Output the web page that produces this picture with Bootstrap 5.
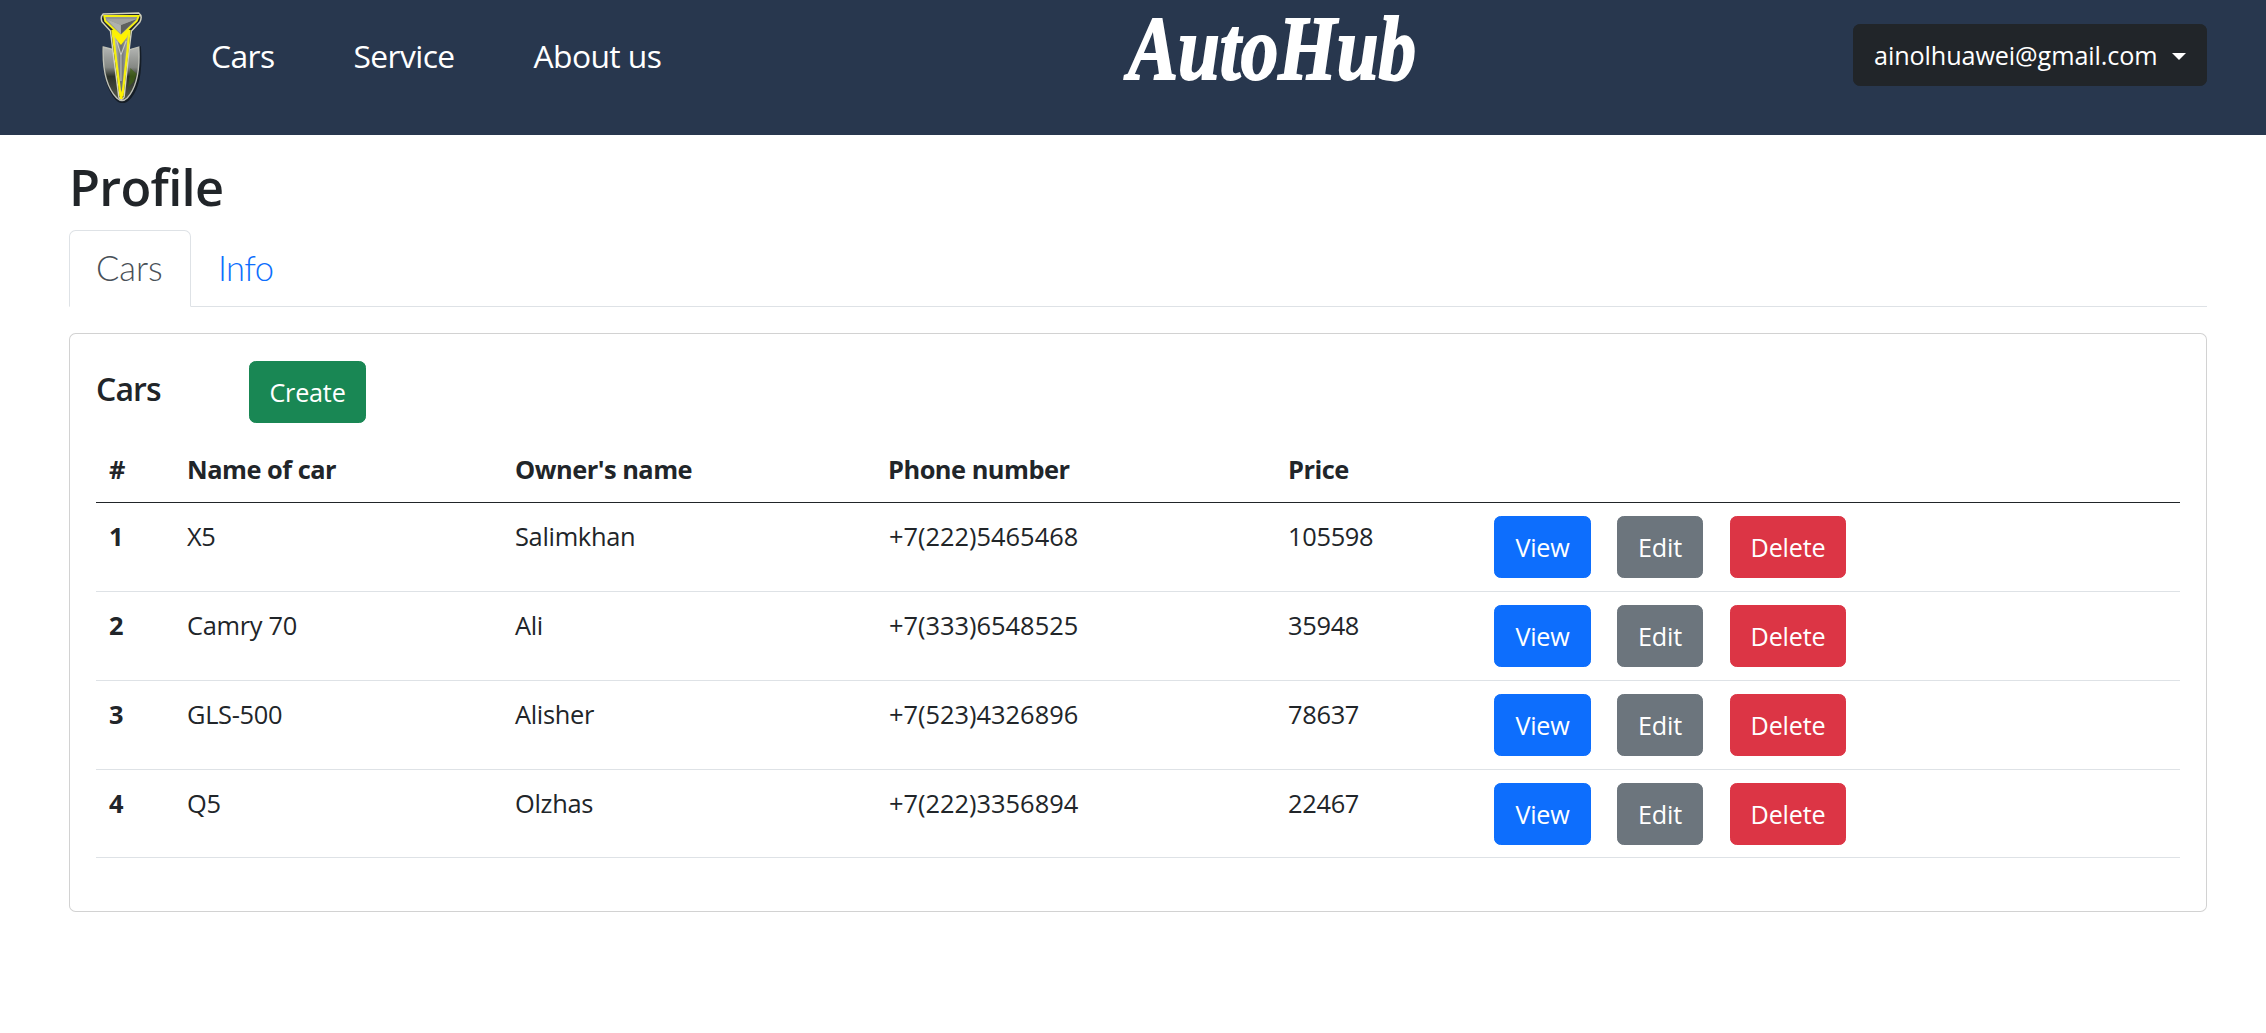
<!DOCTYPE html>
<html lang="en">
<head>
<meta charset="utf-8">
<meta name="viewport" content="width=device-width, initial-scale=1">
<title>AutoHub - Profile</title>
<link href="https://cdn.jsdelivr.net/npm/bootstrap@5.3.0/dist/css/bootstrap.min.css" rel="stylesheet">
<style>
html{font-size:26.4px}
body{font-family:"Open Sans","Noto Sans",sans-serif;font-size:25.4px;line-height:39.6px;color:#212529;overflow-x:hidden}
.topbar{height:135px;background:#28374e;padding:0 59px 0 100px}
.emblem{width:44px;height:94px;margin-top:9px}
.menu-links{margin:36px 0 0 67px;gap:79px}
.menu-links .nav-link{color:#fff;font-size:31.8px;line-height:40px;padding:0;white-space:nowrap;letter-spacing:-.6px}
.wordmark{width:310px;height:110px;margin:0 0 0 457px;overflow:visible}
.wordmark text{font-family:"Liberation Serif",serif;font-weight:700;font-style:italic;font-size:92px;fill:#fff;stroke:#fff;stroke-width:2px}
.btn{--bs-btn-font-size:25.2px;--bs-btn-line-height:39.6px;--bs-btn-border-radius:6.6px;padding:11px 0 9px;height:62px;white-space:nowrap;letter-spacing:-.2px}
.user-btn{width:354px;margin-top:24px;padding-left:20px;text-align:left;letter-spacing:-.1px}
.user-btn::after{margin-left:14px;vertical-align:.22em}
.page{width:2138px;margin-left:69px;padding-top:20px}
.page-title{font-size:50.5px;line-height:64px;font-weight:600;margin:0 0 11px;letter-spacing:-.7px}
.nav-tabs{height:77px}
.nav-tabs .nav-link{--bs-nav-tabs-border-radius:6.6px;height:77px;padding:17px 26px;font-family:Lato,sans-serif;font-weight:300;font-size:34.5px;line-height:40px}
.nav-tabs .nav-link.active{width:122px;color:#495057}
.nav-tabs .nav-link:not(.active){letter-spacing:-.6px}
.panel{margin-top:26px;height:579px;border-radius:6.6px;padding:27px 26px 0}
.panel-title{font-size:32px;line-height:40px;font-weight:600;margin:8px 0 0;width:153px;letter-spacing:-.9px}
.btn-create{width:117px}
.cars{table-layout:fixed;margin:13px 0 0;width:2084px}
.cars>:not(caption)>*>*{padding:14px 13px 12px}
.cars thead th{height:66px;border-bottom:1px solid #212529;letter-spacing:-.5px}
.cars tbody>tr>*{height:89px;border-bottom-width:1px}
.cars tbody>tr:last-child>*{height:88px;padding-bottom:11px}
.cars tbody td{letter-spacing:-.3px}
.cars tbody td:nth-child(4){letter-spacing:0;padding-left:14px}
.cars tbody td:nth-child(n+6){padding-top:13px}
.cars thead{vertical-align:top}
.w-view{width:97px}.w-edit{width:86px}.w-del{width:116px}
</style>
<script src="https://cdn.jsdelivr.net/npm/bootstrap@5.3.0/dist/js/bootstrap.bundle.min.js"></script>
</head>
<body>
<header class="topbar d-flex align-items-start">
  <svg class="emblem flex-shrink-0" viewBox="0 0 42 94" preserveAspectRatio="none" role="img" aria-label="Emblem">
    <defs>
      <linearGradient id="steel" x1="0" x2="1"><stop offset="0" stop-color="#d8dad4"/><stop offset=".5" stop-color="#6d706e"/><stop offset="1" stop-color="#b4b6b2"/></linearGradient>
      <linearGradient id="shade" x1="0" y1="0" x2="0" y2="1"><stop offset="0" stop-color="#b4b6b4"/><stop offset=".38" stop-color="#858884"/><stop offset=".55" stop-color="#2c322a"/><stop offset="1" stop-color="#55584b"/></linearGradient>
    </defs>
    <path d="M2 37Q9 42 14 41L21 88L29 41Q34 41 39 37Q42 78 27 92Q21 97 15 91Q2 77 2 37Z" fill="#151d26"/>
    <path d="M3 38L14 41H27L37 38Q39 74 26 89Q21 94 16 89Q2 74 3 38Z" fill="url(#shade)" stroke="#bfc1b8" stroke-width="1.3"/>
    <path d="M29 59L35 65L32 73L27 78Z" fill="#416413" opacity=".7"/>
    <path d="M3 5L37 4Q41 7 38 13L30 22L28 39L23 88Q20 93 18 88L12 39L10 22L2 13Q0 8 3 5Z" fill="#20252a" stroke="#d3d2bd" stroke-width="1.4"/>
    <path d="M12 22L28 22L26.5 40L21.5 86H19.5L14 40Z" fill="url(#steel)" stroke="#f5f010" stroke-width="2.2"/>
    <path d="M4 7H37L35 12L20 27L5 12Z" fill="#929491" stroke="#f5f010" stroke-width="1.8"/>
    <path d="M6 10L20 16V25Z" fill="#aeb1ad"/><path d="M35 10L20 16V25Z" fill="#5e615f"/><path d="M6 10H35L20 16Z" fill="#a1a39f"/>
    <path d="M12 20L20 27L28 20L26 28L20 36L14 28Z" fill="#fff200"/>
    <path d="M16 32L20 46L25 32M20 46V72" fill="none" stroke="#c8c9c2" stroke-width="1"/>
    <path d="M18 75L20 84L23 75L21.5 90H19Z" fill="#fff200"/>
  </svg>
  <nav class="menu-links nav flex-nowrap flex-shrink-0">
    <a class="nav-link" href="#">Cars</a><a class="nav-link" href="#">Service</a><a class="nav-link" href="#">About us</a>
  </nav>
  <svg class="wordmark flex-shrink-0" viewBox="0 0 310 110" role="img"><text x="10" y="79" textLength="288" lengthAdjust="spacingAndGlyphs">AutoHub</text></svg>
  <button class="btn btn-dark dropdown-toggle user-btn ms-auto" type="button" data-bs-toggle="dropdown">ainolhuawei@gmail.com</button>
</header>
<main class="page">
  <h2 class="page-title">Profile</h2>
  <ul class="nav nav-tabs">
    <li class="nav-item"><a class="nav-link active" href="#">Cars</a></li>
    <li class="nav-item"><a class="nav-link" href="#">Info</a></li>
  </ul>
  <section class="card panel">
    <div class="d-flex align-items-start"><h5 class="panel-title">Cars</h5><a class="btn btn-success btn-create" href="#">Create</a></div>
    <table class="table cars">
      <colgroup><col style="width:78px"><col style="width:328px"><col style="width:373px"><col style="width:400px"><col style="width:206px"><col style="width:123px"><col style="width:113px"><col></colgroup>
      <thead><tr><th>#</th><th>Name of car</th><th>Owner's name</th><th>Phone number</th><th>Price</th><th></th><th></th><th></th></tr></thead>
      <tbody>
        <tr><th>1</th><td>X5</td><td>Salimkhan</td><td>+7(222)5465468</td><td>105598</td><td><a class="btn btn-primary w-view" href="#">View</a></td><td><a class="btn btn-secondary w-edit" href="#">Edit</a></td><td><a class="btn btn-danger w-del" href="#">Delete</a></td></tr>
        <tr><th>2</th><td>Camry 70</td><td>Ali</td><td>+7(333)6548525</td><td>35948</td><td><a class="btn btn-primary w-view" href="#">View</a></td><td><a class="btn btn-secondary w-edit" href="#">Edit</a></td><td><a class="btn btn-danger w-del" href="#">Delete</a></td></tr>
        <tr><th>3</th><td>GLS-500</td><td>Alisher</td><td>+7(523)4326896</td><td>78637</td><td><a class="btn btn-primary w-view" href="#">View</a></td><td><a class="btn btn-secondary w-edit" href="#">Edit</a></td><td><a class="btn btn-danger w-del" href="#">Delete</a></td></tr>
        <tr><th>4</th><td>Q5</td><td>Olzhas</td><td>+7(222)3356894</td><td>22467</td><td><a class="btn btn-primary w-view" href="#">View</a></td><td><a class="btn btn-secondary w-edit" href="#">Edit</a></td><td><a class="btn btn-danger w-del" href="#">Delete</a></td></tr>
      </tbody>
    </table>
  </section>
</main>
</body>
</html>
